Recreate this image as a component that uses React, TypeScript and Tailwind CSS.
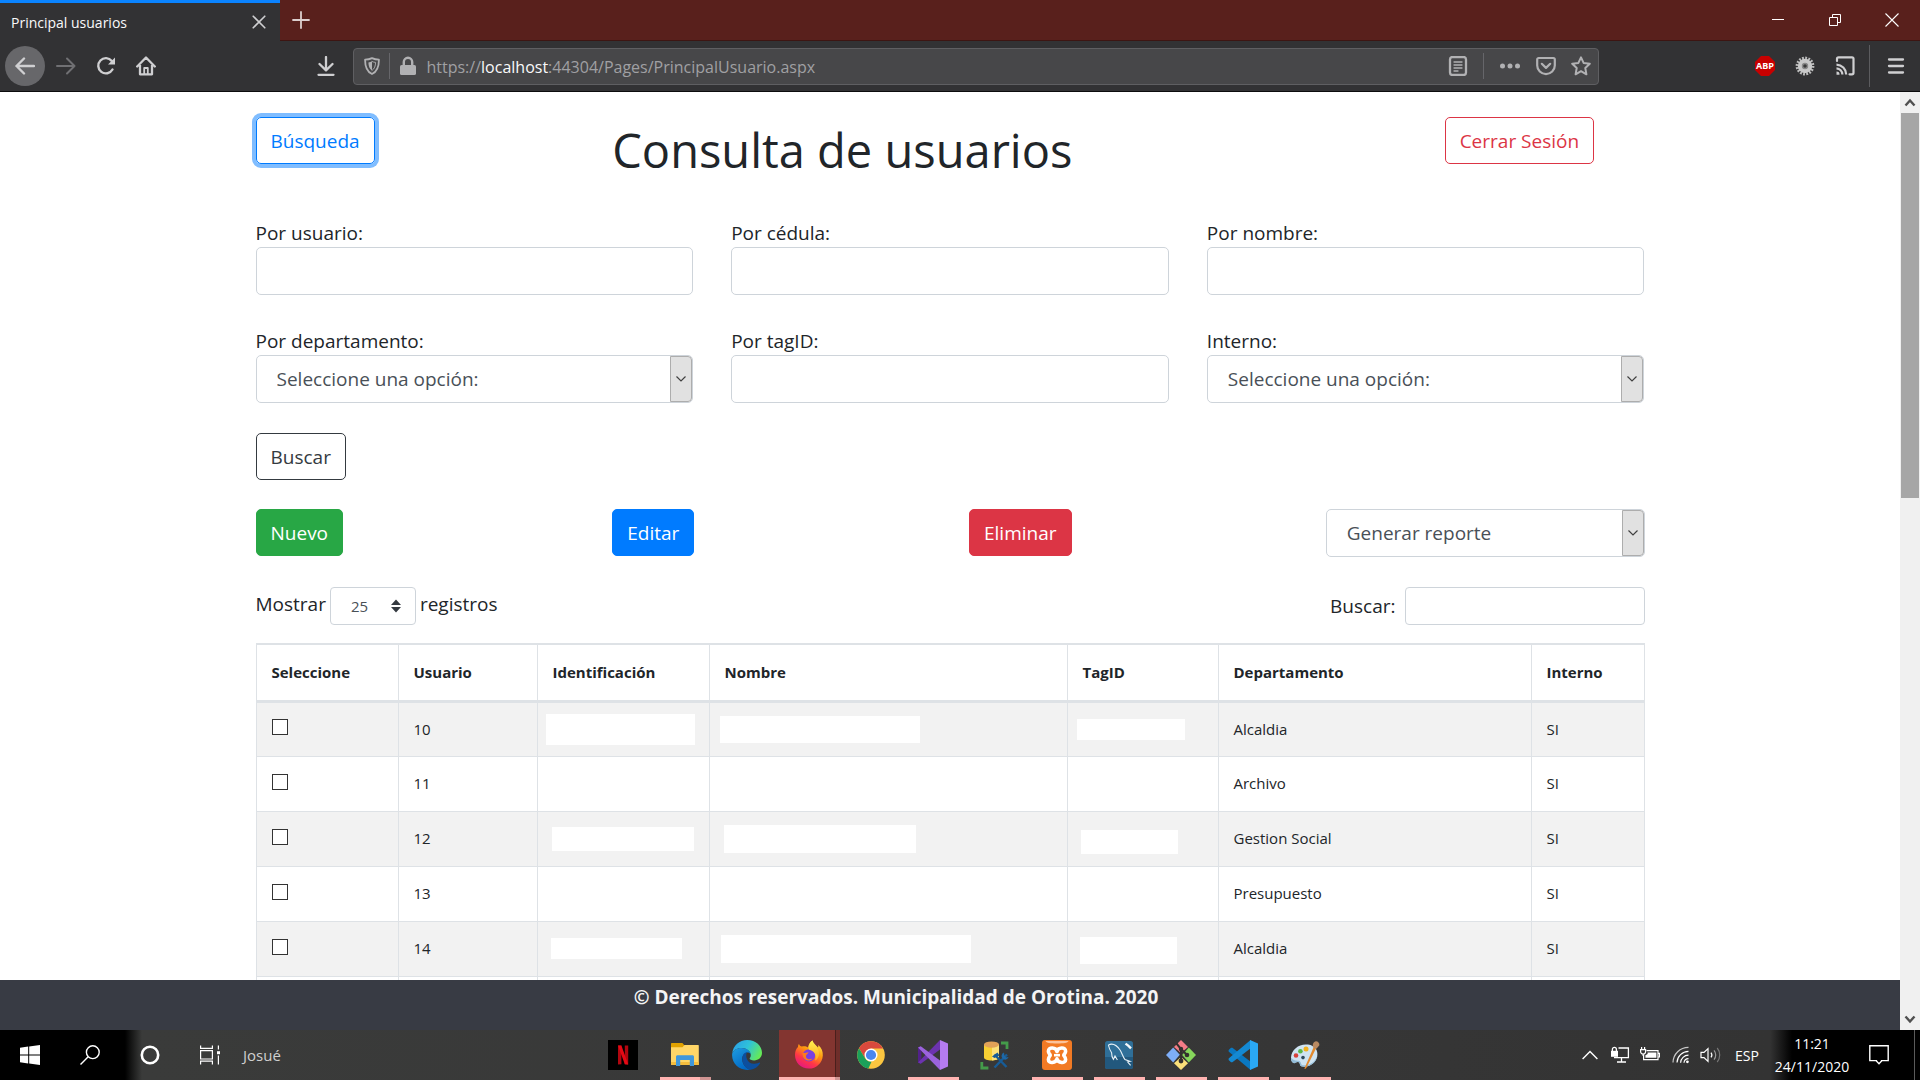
import React from "react";

/* ---------- browser chrome icons ---------- */

const stroke = {
  fill: "none",
  stroke: "currentColor",
  strokeWidth: 2,
  strokeLinecap: "round" as const,
  strokeLinejoin: "round" as const,
};

const BackIcon = () => (
  <svg viewBox="0 0 20 20" className="size-5" {...stroke} strokeWidth={2.4}>
    <path d="M19 10H1.5M9 2.5L1.5 10L9 17.5" />
  </svg>
);
const ForwardIcon = () => (
  <svg viewBox="0 0 20 20" className="size-5" {...stroke}>
    <path d="M1 10H18.5M11 2.5L18.5 10L11 17.5" />
  </svg>
);
const ReloadIcon = () => (
  <svg viewBox="0 0 20 20" className="size-5" {...stroke} strokeWidth={2.4}>
    <path d="M16.5 13.5A7.6 7.6 0 1 1 15.8 5" />
    <path d="M19 1.5V8.5H12Z" fill="currentColor" stroke="none" />
  </svg>
);
const HomeIcon = () => (
  <svg viewBox="0 0 20 20" className="size-5" {...stroke} strokeWidth={2.3}>
    <path d="M1.2 10.5L10 1.5L18.8 10.5M4 9V18.3H16V9" />
    <path d="M8.2 18V12H11.8V18" strokeWidth={1.8} />
  </svg>
);
const DownloadIcon = () => (
  <svg viewBox="0 0 20 20" className="size-5" {...stroke} strokeWidth={2.3}>
    <path d="M10 1V14M3.5 8L10 14.3L16.5 8M2.5 18.8H17.5" />
  </svg>
);
const ShieldIcon = () => (
  <svg viewBox="0 0 20 20" className="size-[18px]" {...stroke}>
    <path d="M10 1.2C7.5 2.4 5 2.9 2.3 3C2.3 10.5 3.6 16 10 18.9C16.4 16 17.7 10.5 17.7 3C15 2.9 12.5 2.4 10 1.2Z" />
    <path d="M10 5C8.8 5.5 7.5 5.8 6 6C6.2 10 7 13 10 15Z" fill="currentColor" stroke="none" />
    <path d="M10 5C11.3 5.6 12.6 5.9 14 6C13.8 10 13 13 10 15" strokeWidth={1} />
  </svg>
);
const LockIcon = () => (
  <svg viewBox="0 0 18 20" className="h-5 w-[18px]">
    <rect x="1" y="9" width="16" height="10" rx="1.6" fill="currentColor" />
    <path d="M4.8 10V6A4.2 4.2 0 0 1 13.2 6V10" fill="none" stroke="currentColor" strokeWidth="2.4" />
  </svg>
);
const ReaderIcon = () => (
  <svg viewBox="0 0 20 20" className="size-5" {...stroke}>
    <rect x="2" y="1" width="16" height="18" rx="2.4" strokeWidth={2.3} />
    <path d="M6 6H14M6 9H14M6 12H14M6 15H10" strokeWidth={1.3} />
  </svg>
);
const DotsIcon = () => (
  <svg viewBox="0 0 22 20" className="h-5 w-[22px]" fill="currentColor">
    <circle cx="3.5" cy="10" r="2.5" />
    <circle cx="11" cy="10" r="2.5" />
    <circle cx="18.5" cy="10" r="2.5" />
  </svg>
);
const PocketIcon = () => (
  <svg viewBox="0 0 20 20" className="size-5" {...stroke} strokeWidth={2.2}>
    <path d="M2.6 2H17.4A1.4 1.4 0 0 1 18.8 3.4V9.5A8.8 8.6 0 0 1 1.2 9.5V3.4A1.4 1.4 0 0 1 2.6 2Z" />
    <path d="M5.8 7.8L10 11.9L14.2 7.8" />
  </svg>
);
const StarIcon = () => (
  <svg viewBox="0 0 20 20" className="size-5" {...stroke}>
    <path d="M10 1.3L12.6 6.9L18.8 7.7L14.3 12L15.4 18.3L10 15.2L4.6 18.3L5.7 12L1.2 7.7L7.4 6.9Z" />
  </svg>
);
const GearIcon = () => (
  <svg viewBox="0 0 20 20" className="size-5">
    <circle cx="10" cy="10" r="7.9" fill="none" stroke="#bdbdbd" strokeWidth="3" strokeDasharray="1.8 1.3" />
    <circle cx="10" cy="10" r="5" fill="none" stroke="#c9c9c9" strokeWidth="4.4" />
    <circle cx="10" cy="10" r="3.2" fill="#8b8b8b" />
    <circle cx="10" cy="10" r="1.8" fill="#3c3c3c" />
  </svg>
);
const CastIcon = () => (
  <svg viewBox="0 0 20 20" className="size-5" {...stroke} strokeWidth={2.2}>
    <path d="M2 5V2.8A1.5 1.5 0 0 1 3.5 1.3H17A1.5 1.5 0 0 1 18.5 2.8V16.8A1.5 1.5 0 0 1 17 18.3H14.5" />
    <path d="M1.5 8.6A10 10 0 0 1 11.2 18.5M1.5 12.4A6.4 6.4 0 0 1 7.4 18.5" strokeLinecap="butt" />
    <path d="M1.5 15.5A3 3 0 0 1 4.5 18.7H1.5Z" fill="currentColor" stroke="none" />
  </svg>
);
const MenuIcon = () => (
  <svg viewBox="0 0 20 20" className="size-5" {...stroke} strokeWidth={2.3}>
    <path d="M3 3.5H17M3 10H17M3 16.5H17" />
  </svg>
);

/* ---------- taskbar icons ---------- */

const StartIcon = () => (
  <svg viewBox="0 0 20 20" className="size-5" fill="#fff">
    <path d="M0 2.8L8.2 1.6V9.5H0ZM9.2 1.5L20 0V9.5H9.2ZM0 10.5H8.2V18.4L0 17.2ZM9.2 10.5H20V20L9.2 18.5Z" />
  </svg>
);
const SearchIcon = () => (
  <svg viewBox="0 0 20 20" className="size-5" fill="none" stroke="#fff" strokeWidth="1.4">
    <circle cx="12.8" cy="7.2" r="6.4" />
    <path d="M8.2 11.8L0.5 19.5" />
  </svg>
);
const CortanaIcon = () => (
  <svg viewBox="0 0 20 20" className="size-5" fill="none" stroke="#fff" strokeWidth="2.6">
    <circle cx="10" cy="10" r="8.2" />
  </svg>
);
const TaskViewIcon = () => (
  <svg viewBox="0 0 20 20" className="size-5" fill="none" stroke="#fff" strokeWidth="1.2">
    <path d="M0.6 0.5V3.4H12.4V0.5M0.6 19.5V16.2H12.4V19.5M0.6 5.6H12.4V14H0.6ZM18.4 0.5V4.5M18.4 10.5V19.5" />
    <path d="M17 6.2H20V9.2H17Z" fill="#fff" stroke="none" />
  </svg>
);
const NetflixIcon = () => (
  <svg viewBox="0 0 30 30" className="size-[30px]">
    <rect width="30" height="30" fill="#000" />
    <path d="M10 5.5H13.4V24.2L10 24.6Z" fill="#b1060f" />
    <path d="M16.8 5.5H20.2V24.6L16.8 24.2Z" fill="#b1060f" />
    <path d="M10 5.5H13.4L20.2 24.6L16.8 24.2Z" fill="#e50914" />
  </svg>
);
const ExplorerIcon = () => (
  <svg viewBox="0 0 30 30" className="size-[30px]">
    <path d="M1 3.6C1 3.2 1.3 3 1.6 3H12.4L14.6 5.6V9H1Z" fill="#e0a100" />
    <path d="M1 7.2H12.5L14.5 5H28C28.6 5 28.8 5.4 28.8 5.8V24.4C28.8 24.8 28.5 25 28 25H1.8C1.3 25 1 24.8 1 24.3Z" fill="#ffd667" />
    <path d="M1 22H28.8V24.4C28.8 24.8 28.5 25 28 25H1.8C1.3 25 1 24.8 1 24.3Z" fill="#f5bd3d" />
    <path d="M6 26V16.8C6 15.8 6.6 15.2 7.6 15.2H22.4C23.4 15.2 24 15.8 24 16.8V26H19.8V20H10.2V26Z" fill="#3f97db" />
  </svg>
);
const EdgeIcon = () => (
  <svg viewBox="0 0 30 30" className="size-[30px]">
    <defs>
      <linearGradient id="edgeTop" x1="0" y1="0.2" x2="1" y2="0.6">
        <stop offset="0" stopColor="#2a9fe8" />
        <stop offset="0.5" stopColor="#2fc3d8" />
        <stop offset="1" stopColor="#66eb55" />
      </linearGradient>
      <linearGradient id="edgeBody" x1="0" y1="0" x2="0.6" y2="1">
        <stop offset="0" stopColor="#1f9de0" />
        <stop offset="1" stopColor="#0067c4" />
      </linearGradient>
    </defs>
    <path d="M0.2 13.5C1 5.6 7.4 0 15.2 0C23.8 0 30 6 30 12.8C30 17.8 26.2 20.4 22.2 20.4C19.4 20.4 17.6 19.6 17.6 18.6C17.6 17.9 18.8 17.4 18.8 15C18.8 11.4 14.6 8 9.4 8C4.8 8 1.6 10.4 0.2 13.5Z" fill="url(#edgeTop)" />
    <path d="M0.2 13.5C1.6 10.2 5 8 9.4 8C14.4 8 18.2 10.8 18.8 14C16.6 10.8 10.6 12.4 10.2 18.6C10 23.6 13.6 28.6 18.4 29.6C8.4 31.6 -1 24 0.2 13.5Z" fill="url(#edgeBody)" />
    <path d="M10.2 18.4C10.4 14.6 12.6 12.6 15 12.2C13 15.8 14.8 23.6 22 23.8C25 23.9 26.8 22.8 27.4 22.6C28 22.5 28.2 23 28 23.4C26 26.8 22.6 29.2 18.4 29.8C13.6 28.6 10 23.6 10.2 18.4Z" fill="#0c4f9e" />
  </svg>
);
const FirefoxIcon = () => (
  <svg viewBox="0 0 30 30" className="size-[30px]">
    <defs>
      <linearGradient id="ffBody" x1="0.8" y1="0" x2="0.25" y2="1">
        <stop offset="0" stopColor="#fff44f" />
        <stop offset="0.4" stopColor="#ff980e" />
        <stop offset="0.7" stopColor="#ff3647" />
        <stop offset="1" stopColor="#e31587" />
      </linearGradient>
      <linearGradient id="ffTail" x1="0.5" y1="0" x2="0.5" y2="1">
        <stop offset="0" stopColor="#fff44f" />
        <stop offset="1" stopColor="#ffa21f" />
      </linearGradient>
    </defs>
    <path d="M1 15C1 11 2.4 8.6 4 7C4 5.8 4.4 4.6 5 4C5.4 5.4 6.4 6.2 8 6.6C10 6 12.4 6.4 14 7.6C14.4 4.6 16 1.8 18.6 0.4C18.8 3.6 21.4 4.8 24 7.4C24.4 6.6 24.4 5.8 24.2 5C27.6 7.6 29 11.4 28.8 15.4C28.4 22.8 22.4 28.6 14.8 28.6C7 28.6 1 22.6 1 15Z" fill="url(#ffBody)" />
    <circle cx="15" cy="15.4" r="6.2" fill="#7a3fe0" />
    <path d="M8.4 13C10.4 13.2 12.6 12.4 14.6 12.2C14 14 12.6 14.2 12.2 15.2C11 18.6 15 20.2 18.4 18.4C16 22.4 8.2 21 8.4 13Z" fill="#ff7a1c" />
    <path d="M18.6 0.4C18.8 3.6 24.8 5.6 25 13.4C25 17 23 19.6 21 20.6C23 14.4 20 10.8 15 9.8C14 6.6 15.4 2.4 18.6 0.4Z" fill="url(#ffTail)" />
  </svg>
);
const ChromeIcon = () => (
  <svg viewBox="0 0 30 30" className="size-[30px]">
    <circle cx="15" cy="15" r="13.8" fill="#fbc640" />
    <path d="M3 8.2A13.8 13.8 0 0 1 27 8.4H15L9 18Z" fill="#d9493d" />
    <path d="M3 8.2L9.2 18.4C10.6 20.8 13 21.8 15.6 21.4L12.4 28.6A13.8 13.8 0 0 1 3 8.2Z" fill="#1ba05a" />
    <circle cx="15" cy="15" r="6.5" fill="#fff" />
    <circle cx="15" cy="15" r="5.1" fill="#4a86ee" />
  </svg>
);
const VisualStudioIcon = () => (
  <svg viewBox="0 0 30 30" className="size-[30px]">
    <path d="M0 7.6L2.8 6.2L3.4 9.5V20.5L2.8 23.8L0 22.4Z" fill="#52218a" />
    <path d="M2.8 23.8L0 22.4L22 0V9.4Z" fill="#6c33af" />
    <path d="M2.8 6.2L22 20.6V30L0 7.6Z" fill="#9b63dc" />
    <path d="M22 0L30 3.4V26.6L22 30Z" fill="#b57bf0" />
  </svg>
);
const DatabaseToolsIcon = () => (
  <svg viewBox="0 0 30 30" className="size-[30px]">
    <path d="M4 4.5V17.5C4 21.5 19 21.5 19 17.5V4.5Z" fill="#f7cf33" />
    <path d="M12 6V20.4C16 20.2 19 19 19 17.5V4.5Z" fill="#fde27a" />
    <ellipse cx="11.5" cy="4.6" rx="7.5" ry="3.2" fill="#e2a258" />
    <path d="M21 3H27V9M1.8 22V28H8.4" fill="none" stroke="#449b4a" strokeWidth="2.8" />
    <path d="M14.5 14.5L26.5 27M27 14.5L14.5 27.5" stroke="#175c97" strokeWidth="2.4" />
    <path d="M12 16.5L17.5 12.5L19.5 15.5L14.5 18Z" fill="#175c97" />
    <path d="M24 12.6A3.6 3.6 0 1 0 28.6 17L26 17.4L24.4 15.6Z" fill="#1d68a8" />
  </svg>
);
const XamppIcon = () => (
  <svg viewBox="0 0 30 30" className="size-[30px]">
    <rect width="30" height="30" rx="3" fill="#f27a24" />
    <path d="M3.5 1H26.5C25.5 3 22 3.4 15 3.4C8 3.4 4.5 3 3.5 1Z" fill="#fbc29a" />
    <path
      d="M15 11.5C14 7 6.4 6.6 6.4 11.2C6.4 13.6 8.2 14.4 8.2 15.2C8.2 16 6.4 17 6.4 19.4C6.4 24 14 23.2 15 18.8C16 23.2 23.6 24 23.6 19.4C23.6 17 21.8 16 21.8 15.2C21.8 14.4 23.6 13.6 23.6 11.2C23.6 6.6 16 7 15 11.5Z"
      fill="none"
      stroke="#fff"
      strokeWidth="3.6"
      strokeLinejoin="round"
    />
    <path d="M12 15.2H18" stroke="#fff" strokeWidth="2.6" />
  </svg>
);
const MySqlIcon = () => (
  <svg viewBox="0 0 30 30" className="size-[30px]">
    <rect x="1" y="1" width="28" height="28" rx="2.5" fill="#2f6f98" />
    <path d="M1 17H29V26.5A2.5 2.5 0 0 1 26.5 29H3.5A2.5 2.5 0 0 1 1 26.5Z" fill="#22587d" />
    <path
      d="M4.4 5C8.4 3 13 5.6 16.2 10.2C18.2 13.6 19 17.4 21 19.6L26 21.4L23.6 21.8L26.6 25.4M4.4 5C5 8 6 10.4 7.6 12.8C7.6 15.4 8 17.6 9.4 19.4L11 16L13.4 20"
      fill="none"
      stroke="#e6f0f6"
      strokeWidth="1.1"
    />
    <path d="M21.5 3.6L24.2 5.6L27 8.4" stroke="#f2f7fa" strokeWidth="2.4" />
  </svg>
);
const GitIcon = () => (
  <svg viewBox="0 0 30 30" className="size-[30px]">
    <path d="M15 0L22 7L15 13L8 7Z" fill="#f47c86" />
    <path d="M7.2 7.6L13.8 14.8L7.2 22.4L0 15Z" fill="#7eaef8" />
    <path d="M22.8 7.6L30 15L22.8 22.4L16.2 15Z" fill="#86d65b" />
    <path d="M15 17L22 23.2L15 30L8 23.2Z" fill="#fbe07a" />
    <path d="M10.5 3.5L15 9V21M15 9L21 15" fill="none" stroke="#33302e" strokeWidth="2" />
    <circle cx="15" cy="9" r="2.2" fill="#33302e" />
    <circle cx="15" cy="21" r="2.4" fill="#33302e" />
    <circle cx="21" cy="15" r="2.3" fill="#33302e" />
  </svg>
);
const VsCodeIcon = () => (
  <svg viewBox="0 0 30 30" className="size-[30px]">
    <path d="M0.6 10L3 7.8L4.4 7.8L23 22V29.8L22 29.4L0.6 11.4Z" fill="#0a78c2" />
    <path d="M0.6 20L3 22.2L4.4 22.2L23 8V0.2L22 0.6L0.6 18.6Z" fill="#1489d3" />
    <path d="M22 0L30 3.6V26.4L22 30Z" fill="#2aa8f4" />
  </svg>
);
const PaintIcon = () => (
  <svg viewBox="0 0 30 30" className="size-[30px]">
    <path d="M1 17.5C1.6 9 9.6 3.4 18 4.6C25 5.6 28.4 10.6 27.2 16.4C26 22.4 19.6 27.4 12.4 26.6C8.6 26.2 11 22.4 8 22C5.4 21.8 5 24 3 22.8C1.4 21.8 0.9 19.6 1 17.5Z" fill="#cfe4f2" />
    <path d="M3 22.8C1.4 21.8 0.9 19.6 1 17.5C4 21 6 20.4 8.4 20.8C12 21.4 10 25 13 25.2C19 25.6 25 22 27.2 16.4C26 22.4 19.6 27.4 12.4 26.6C8.6 26.2 11 22.4 8 22C5.4 21.8 5 24 3 22.8Z" fill="#93bcd8" />
    <circle cx="6" cy="15.5" r="2.3" fill="#d9433c" />
    <circle cx="10.4" cy="11.2" r="2.3" fill="#5cb848" />
    <circle cx="16" cy="9" r="2.5" fill="#f2b01e" />
    <circle cx="13" cy="17.6" r="1.8" fill="#2e4a5c" />
    <path d="M14.4 28.6L23.6 7.2L26 8.4L16.6 27.6C16 28.6 15 29.4 14.4 28.6Z" fill="#e28a2f" />
    <path d="M23 7.4C22.2 4 23.6 1.6 26 1.2C28 1.2 29.6 3 29.4 5.2L26.4 8.8Z" fill="#b98a62" />
  </svg>
);

const ChevronUpIcon = () => (
  <svg viewBox="0 0 16 10" className="h-[10px] w-4" fill="none" stroke="#fff" strokeWidth="1.4">
    <path d="M0.6 9L8 1.4L15.4 9" />
  </svg>
);
const NetworkIcon = () => (
  <svg viewBox="0 0 20 18" className="h-[18px] w-5" fill="none" stroke="#fff" strokeWidth="1.3">
    <path d="M8.5 2H18.4V11.6H4M11.5 11.6V16M7 16H16" />
    <path d="M2.4 5V3.4A2 2 0 0 1 6.4 3.4V5" />
    <rect x="1" y="4.8" width="7" height="6" fill="#fff" stroke="none" />
  </svg>
);
const BatteryIcon = () => (
  <svg viewBox="0 0 20 18" className="h-[18px] w-5" fill="none" stroke="#fff" strokeWidth="1.2">
    <path d="M6.5 4.6H18V13.6H3.6V8.4" />
    <path d="M7.6 6.4H16.4V11.8H5.4V9.2L7.6 8Z" fill="#fff" stroke="none" />
    <path d="M18 7.4H19.6V11H18" />
    <path d="M1.6 1V3.4M4.6 1V3.4M0.6 3.6H5.6V5.6A2.5 2.5 0 0 1 0.6 5.6ZM3.1 8V10" />
  </svg>
);
const WifiIcon = () => (
  <svg viewBox="0 0 18 18" className="size-[18px]" fill="none" stroke="#fff" strokeWidth="1.2">
    <path d="M1 16.4A15.4 15.4 0 0 1 16.5 1.4" stroke="#c8c8c8" />
    <path d="M5 16.6A11.6 11.6 0 0 1 16.5 5.4M8.6 16.8A8 8 0 0 1 16.5 9.2M12 16.8A4.6 4.6 0 0 1 16.5 12.6" />
    <circle cx="15.4" cy="15.8" r="1.4" fill="#fff" stroke="none" />
  </svg>
);
const VolumeIcon = () => (
  <svg viewBox="0 0 22 18" className="h-[18px] w-[22px]" fill="none" stroke="#fff" strokeWidth="1.2">
    <path d="M1 6.4H4L8 2.6V15.4L4 11.6H1Z" />
    <path d="M11 6.6A4 4 0 0 1 11 11.4" />
    <path d="M14 4.4A7 7 0 0 1 14 13.6" stroke="#9a9a9a" />
    <path d="M17.2 2A11 11 0 0 1 17.2 16" stroke="#777" />
  </svg>
);
const NotificationIcon = () => (
  <svg viewBox="0 0 20 20" className="size-5" fill="none" stroke="#fff" strokeWidth="1.4">
    <path d="M0.8 0.8H19.2V15.6H12.6V16L10 18.8L7.4 16V15.6H0.8Z" />
  </svg>
);

/* ---------- browser window ---------- */

function TabBar() {
  return (
    <header className="flex h-[41px] shrink-0 border-b border-[#3d1512] bg-[#59201c] text-[#f9f9fa]">
      <div className="-mb-px flex w-[280px] shrink-0 items-center justify-between border-t-[3px] border-[#0a84ff] bg-[#323234] pl-[11px] pr-[14px] text-[14px]">
        <span>Principal usuarios</span>
        <button aria-label="Cerrar pestaña" className="text-[#cfcfd1]">
          <svg viewBox="0 0 14 14" className="size-[14px]" {...stroke} strokeWidth={1.6}>
            <path d="M1.2 1.2L12.8 12.8M12.8 1.2L1.2 12.8" />
          </svg>
        </button>
      </div>
      <button aria-label="Nueva pestaña" className="flex w-[42px] items-center justify-center text-[#dccfce]">
        <svg viewBox="0 0 18 18" className="size-[18px]" {...stroke} strokeWidth={1.8}>
          <path d="M9 1V17M1 9H17" />
        </svg>
      </button>
      <div className="ml-auto flex">
        <button aria-label="Minimizar" className="flex w-[56px] items-center justify-center">
          <svg viewBox="0 0 12 12" className="size-3" stroke="#fff"><path d="M0 5.5H12" /></svg>
        </button>
        <button aria-label="Restaurar" className="flex w-[57px] items-center justify-center">
          <svg viewBox="0 0 12 12" className="size-3" fill="none" stroke="#fff">
            <path d="M0.5 3.5H8.5V11.5H0.5ZM3.5 3.5V0.5H11.5V8.5H8.5" />
          </svg>
        </button>
        <button aria-label="Cerrar" className="flex w-[57px] items-center justify-center">
          <svg viewBox="0 0 14 14" className="size-[14px]" stroke="#fff" strokeWidth="1.1">
            <path d="M0.5 0.5L13.5 13.5M13.5 0.5L0.5 13.5" />
          </svg>
        </button>
      </div>
    </header>
  );
}

function Toolbar() {
  return (
    <nav className="flex h-[51px] shrink-0 items-center border-b border-[#0c0c0d] bg-[#323234] pl-[5px] pr-[14px] text-[#cfcfd1]">
      <button aria-label="Atrás" className="flex size-10 shrink-0 items-center justify-center rounded-full bg-[#67676a]">
        <BackIcon />
      </button>
      <div className="ml-px flex">
        <button aria-label="Adelante" className="flex size-10 items-center justify-center text-[#707073]"><ForwardIcon /></button>
        <button aria-label="Recargar" className="flex size-10 items-center justify-center"><ReloadIcon /></button>
        <button aria-label="Inicio" className="flex size-10 items-center justify-center"><HomeIcon /></button>
      </div>
      <div className="min-w-0 flex-[140]" />
      <button aria-label="Descargas" className="flex size-10 items-center justify-center"><DownloadIcon /></button>
      <div className="ml-[7px] flex h-[37px] w-[1246px] min-w-0 items-center rounded-sm border border-[#5f5f62] bg-[#474749] text-[#b1b1b3]">
        <span className="flex w-[35px] shrink-0 justify-center"><ShieldIcon /></span>
        <span className="h-[26px] w-px bg-[#66666a]" />
        <span className="flex w-[36px] shrink-0 justify-center"><LockIcon /></span>
        <span className="min-w-0 flex-1 truncate pt-[2px] text-[16px] text-[#a0a0a3]">
          https://<span className="text-[#f9f9fa]">localhost</span>:44304/Pages/PrincipalUsuario.aspx
        </span>
        <button aria-label="Vista de lectura" className="flex w-[50px] shrink-0 justify-center"><ReaderIcon /></button>
        <span className="h-[26px] w-px bg-[#66666a]" />
        <button aria-label="Acciones de página" className="ml-[8px] flex w-[36px] shrink-0 justify-center"><DotsIcon /></button>
        <button aria-label="Pocket" className="flex w-[35px] shrink-0 justify-center"><PocketIcon /></button>
        <button aria-label="Marcador" className="flex w-[35px] shrink-0 justify-center"><StarIcon /></button>
      </div>
      <div className="min-w-0 flex-[145]" />
      <button aria-label="Adblock Plus" className="flex size-10 items-center justify-center">
        <svg viewBox="0 0 20 20" className="size-5">
          <path d="M6 0H14L20 6V14L14 20H6L0 14V6Z" fill="#c80000" />
          <text x="10" y="13.4" textAnchor="middle" fontSize="9" fontWeight="700" fill="#fff">ABP</text>
        </svg>
      </button>
      <button aria-label="Ajustes" className="flex size-10 items-center justify-center"><GearIcon /></button>
      <button aria-label="Transmitir" className="flex size-10 items-center justify-center"><CastIcon /></button>
      <span className="ml-[4px] h-[42px] w-px bg-[#5c5c5f]" />
      <button aria-label="Menú" className="ml-[16px] flex justify-center"><MenuIcon /></button>
    </nav>
  );
}

function Scrollbar() {
  return (
    <div className="flex w-5 shrink-0 flex-col items-center bg-[#f0f0f0] text-[#505050]">
      <svg viewBox="0 0 20 21" className="h-[21px] w-5 shrink-0" fill="none" stroke="currentColor" strokeWidth="2.4">
        <path d="M5.5 13.5L10 8.5L14.5 13.5" />
      </svg>
      <div className="h-[41%] w-[18px] bg-[#a6a6a6]" />
      <svg viewBox="0 0 20 21" className="mt-auto h-[21px] w-5 shrink-0" fill="none" stroke="currentColor" strokeWidth="2.4">
        <path d="M5.5 7.5L10 12.5L14.5 7.5" />
      </svg>
    </div>
  );
}

/* ---------- page ---------- */

const btn = "h-[47px] rounded-[5px] border px-[14px] pt-[2px] text-[19px] leading-none";
const control = "w-full rounded-[5px] border border-[#ced4da] bg-white text-[19px] text-[#495057] outline-none";
const fieldLabel = "block h-[30px] text-[19px] leading-8";

function TextField({ id, label }: { id: string; label: string }) {
  return (
    <div>
      <label htmlFor={id} className={fieldLabel}>{label}</label>
      <input id={id} type="text" className={`${control} h-12 px-[15px]`} />
    </div>
  );
}

function DropDown({ id, text, label }: { id: string; text: string; label?: string }) {
  return (
    <div className="relative">
      <select id={id} aria-label={label} className={`${control} block h-12 appearance-none pl-5 pr-8`}>
        <option>{text}</option>
      </select>
      <span className="pointer-events-none absolute inset-y-px right-px flex w-[22px] items-center justify-center rounded-r-[4px] border border-[#adadad] bg-[#e1e1e1]">
        <svg viewBox="0 0 10 6" className="h-[6px] w-[10px]" fill="none" stroke="#404040" strokeWidth="1.2">
          <path d="M0.5 0.5L5 5L9.5 0.5" />
        </svg>
      </span>
    </div>
  );
}

function SelectField({ id, label }: { id: string; label: string }) {
  return (
    <div>
      <label htmlFor={id} className={fieldLabel}>{label}</label>
      <DropDown id={id} text="Seleccione una opción:" />
    </div>
  );
}

type Row = { user: string; dept: string; masks?: [string, string, string] };

const rows: Row[] = [
  { user: "10", dept: "Alcaldia", masks: ["ml-[8px] h-[31px] w-[149px]", "ml-[10px] h-[27px] w-[200px]", "ml-[9px] h-[21px] w-[108px]"] },
  { user: "11", dept: "Archivo" },
  { user: "12", dept: "Gestion Social", masks: ["ml-[14px] h-[24px] w-[142px]", "ml-[14px] h-[28px] w-[192px]", "ml-[13px] mt-[6px] h-[24px] w-[97px]"] },
  { user: "13", dept: "Presupuesto" },
  { user: "14", dept: "Alcaldia", masks: ["ml-[13px] h-[21px] w-[131px]", "ml-[11px] h-[28px] w-[250px]", "ml-[12px] mt-[4px] h-[27px] w-[97px]"] },
];

const headings = ["Seleccione", "Usuario", "Identificación", "Nombre", "TagID", "Departamento", "Interno"];

function UsersTable() {
  const cell = "border border-[#dee2e6]";
  return (
    <table className="mt-[18px] w-full table-fixed border-collapse text-[15px]">
      <colgroup>
        <col className="w-[142px]" />
        <col className="w-[139px]" />
        <col className="w-[172px]" />
        <col className="w-[358px]" />
        <col className="w-[151px]" />
        <col className="w-[313px]" />
        <col className="w-[113px]" />
      </colgroup>
      <thead>
        <tr className="h-[57px]">
          {headings.map((h) => (
            <th key={h} scope="col" className="border border-b-[3px] border-t-2 border-[#dee2e6] px-[15px] text-left font-bold">
              {h}
            </th>
          ))}
        </tr>
      </thead>
      <tbody>
        {rows.map((r) => (
          <tr key={r.user} className="h-[55px] odd:bg-[#f2f2f2]">
            <td className={`${cell} px-[15px]`}>
              <input
                type="checkbox"
                aria-label={`Seleccionar usuario ${r.user}`}
                className="-mt-1 block size-4 appearance-none border border-[#333] bg-white"
              />
            </td>
            <td className={`${cell} px-[15px]`}>{r.user}</td>
            {[0, 1, 2].map((i) => (
              <td key={i} className={cell}>
                {r.masks && <span className={`block bg-white ${r.masks[i]}`} />}
              </td>
            ))}
            <td className={`${cell} px-[15px]`}>{r.dept}</td>
            <td className={`${cell} px-[15px]`}>SI</td>
          </tr>
        ))}
        <tr className="h-[55px]">
          {headings.map((h) => (
            <td key={h} className={cell} />
          ))}
        </tr>
      </tbody>
    </table>
  );
}

function UsersPage() {
  return (
    <main className="mx-auto w-3/4 px-[18px] pt-[25px] text-[#212529]">
      <div className="grid grid-cols-12 gap-x-[38px]">
        <div className="col-span-3">
          <button className={`${btn} border-[#007bff] text-[#007bff] ring-4 ring-[#80bdff]`}>Búsqueda</button>
        </div>
        <h1 className="col-span-7 mb-[10px] h-[60px] whitespace-nowrap text-[47px] leading-[66px]">Consulta de usuarios</h1>
        <div className="col-span-2">
          <button className={`${btn} whitespace-nowrap border-[#dc3545] text-[#dc3545]`}>Cerrar Sesión</button>
        </div>
      </div>

      <form className="mt-[30px] grid grid-cols-3 gap-x-[38px] gap-y-[30px]" onSubmit={(e) => e.preventDefault()}>
        <TextField id="usuario" label="Por usuario:" />
        <TextField id="cedula" label="Por cédula:" />
        <TextField id="nombre" label="Por nombre:" />
        <SelectField id="departamento" label="Por departamento:" />
        <TextField id="tag" label="Por tagID:" />
        <SelectField id="interno" label="Interno:" />
        <div className="col-span-3">
          <button className={`${btn} border-[#343a40] text-[#343a40]`}>Buscar</button>
        </div>
      </form>

      <div className="mt-[29px] grid grid-cols-4 gap-x-[38px]">
        <div><button className={`${btn} border-[#28a745] bg-[#28a745] text-white`}>Nuevo</button></div>
        <div><button className={`${btn} border-[#007bff] bg-[#007bff] text-white`}>Editar</button></div>
        <div><button className={`${btn} border-[#dc3545] bg-[#dc3545] text-white`}>Eliminar</button></div>
        <DropDown id="reporte" text="Generar reporte" label="Reporte" />
      </div>

      <div className="mt-[30px] flex h-[38px] items-center justify-between text-[19px]">
        <label className="flex items-center gap-[4px]">
          <span className="-mt-1">Mostrar</span>
          <span className="relative">
            <select className="block h-[38px] w-[86px] appearance-none rounded-[4px] border border-[#ced4da] bg-white pl-5 text-[15px] text-[#495057]">
              <option>25</option>
            </select>
            <svg viewBox="0 0 10 14" className="pointer-events-none absolute right-[15px] top-3 h-[14px] w-[10px]" fill="#343a40">
              <path d="M0 6L5 0.5L10 6ZM0 8L5 13.5L10 8Z" />
            </svg>
          </span>
          <span className="-mt-1">registros</span>
        </label>
        <label className="flex items-center gap-[9px]">
          Buscar:
          <input type="search" className="h-[38px] w-60 rounded-[4px] border border-[#ced4da] px-[10px] text-[15px]" />
        </label>
      </div>

      <UsersTable />
    </main>
  );
}

/* ---------- taskbar ---------- */

const apps: { name: string; icon: React.ReactNode; open?: "one" | "many" | "active" }[] = [
  { name: "Netflix", icon: <NetflixIcon /> },
  { name: "Explorador", icon: <ExplorerIcon />, open: "many" },
  { name: "Edge", icon: <EdgeIcon /> },
  { name: "Firefox", icon: <FirefoxIcon />, open: "active" },
  { name: "Chrome", icon: <ChromeIcon /> },
  { name: "Visual Studio", icon: <VisualStudioIcon />, open: "one" },
  { name: "SQL Server", icon: <DatabaseToolsIcon /> },
  { name: "XAMPP", icon: <XamppIcon />, open: "one" },
  { name: "MySQL Workbench", icon: <MySqlIcon />, open: "one" },
  { name: "Git", icon: <GitIcon />, open: "one" },
  { name: "Visual Studio Code", icon: <VsCodeIcon />, open: "one" },
  { name: "Paint", icon: <PaintIcon />, open: "one" },
];

function Taskbar() {
  return (
    <footer className="flex h-[50px] shrink-0 items-center bg-[linear-gradient(90deg,#000_0,#000_125px,#3a3b3a_142px,#383838_50%,#333_calc(100%-150px),#000_calc(100%-128px),#000_100%)] text-[15px] text-white">
      <div className="flex h-full min-w-0 flex-1 items-center">
        <button aria-label="Inicio" className="flex w-[60px] justify-center"><StartIcon /></button>
        <button aria-label="Buscar" className="flex w-[60px] justify-center"><SearchIcon /></button>
        <button aria-label="Cortana" className="flex w-[60px] justify-center"><CortanaIcon /></button>
        <button aria-label="Vista de tareas" className="flex w-[60px] justify-center"><TaskViewIcon /></button>
        <span className="ml-[3px] text-[15px] text-[#d0d0d0]">Josué</span>
      </div>
      <div className="ml-2 flex h-full shrink-0">
        {apps.map((a) => (
          <button
            key={a.name}
            aria-label={a.name}
            className={`relative flex h-full w-[62px] items-center justify-center ${a.open === "active" ? "bg-[linear-gradient(90deg,transparent_0,transparent_1px,#833530_1px,#833530_57px,#4a1f1c_57px,#4a1f1c_58px,#6e2e2a_58px)]" : ""}`}
          >
            {a.icon}
            {a.open === "one" && <span className="absolute bottom-0 left-[6px] h-[3px] w-[51px] bg-[#ffb3b1]" />}
            {a.open === "many" && (
              <span className="absolute bottom-0 left-[6px] flex h-[3px] w-[51px] bg-[#cf9492]">
                <span className="h-full w-10 bg-[#ffb3b1]" />
              </span>
            )}
            {a.open === "active" && (
              <span className="absolute bottom-0 left-px right-0 flex h-[3px] bg-[#cf9492]">
                <span className="h-full w-14 bg-[#ffb3b1]" />
              </span>
            )}
          </button>
        ))}
      </div>
      <div className="flex h-full flex-1 items-center justify-end">
        <button aria-label="Iconos ocultos" className="flex w-[30px] justify-center"><ChevronUpIcon /></button>
        <span className="flex w-[30px] justify-center"><NetworkIcon /></span>
        <span className="flex w-[30px] justify-center"><BatteryIcon /></span>
        <span className="flex w-[31px] justify-center"><WifiIcon /></span>
        <span className="flex w-[30px] justify-center"><VolumeIcon /></span>
        <span className="w-[42px] text-center text-[14px]">ESP</span>
        <div className="w-[88px] text-center text-[14px] leading-[23px]">
          <div>11:21</div>
          <div>24/11/2020</div>
        </div>
        <button aria-label="Notificaciones" className="flex w-[46px] justify-center"><NotificationIcon /></button>
        <span className="ml-3 mr-[5px] h-full w-px bg-[#5a5a5a]" />
      </div>
    </footer>
  );
}

export default function App() {
  return (
    <div className="flex h-screen flex-col overflow-hidden bg-white font-['Open_Sans',sans-serif]">
      <TabBar />
      <Toolbar />
      <div className="flex min-h-0 flex-1">
        <div className="flex min-w-0 flex-1 flex-col">
          <div className="min-h-0 flex-1 overflow-hidden">
            <UsersPage />
          </div>
          <div className="h-[50px] shrink-0 bg-[#383b44] pr-[108px] text-center text-[19px] font-bold leading-[34px] text-[#f4f4f5]">
            © Derechos reservados. Municipalidad de Orotina. 2020
          </div>
        </div>
        <Scrollbar />
      </div>
      <Taskbar />
    </div>
  );
}
